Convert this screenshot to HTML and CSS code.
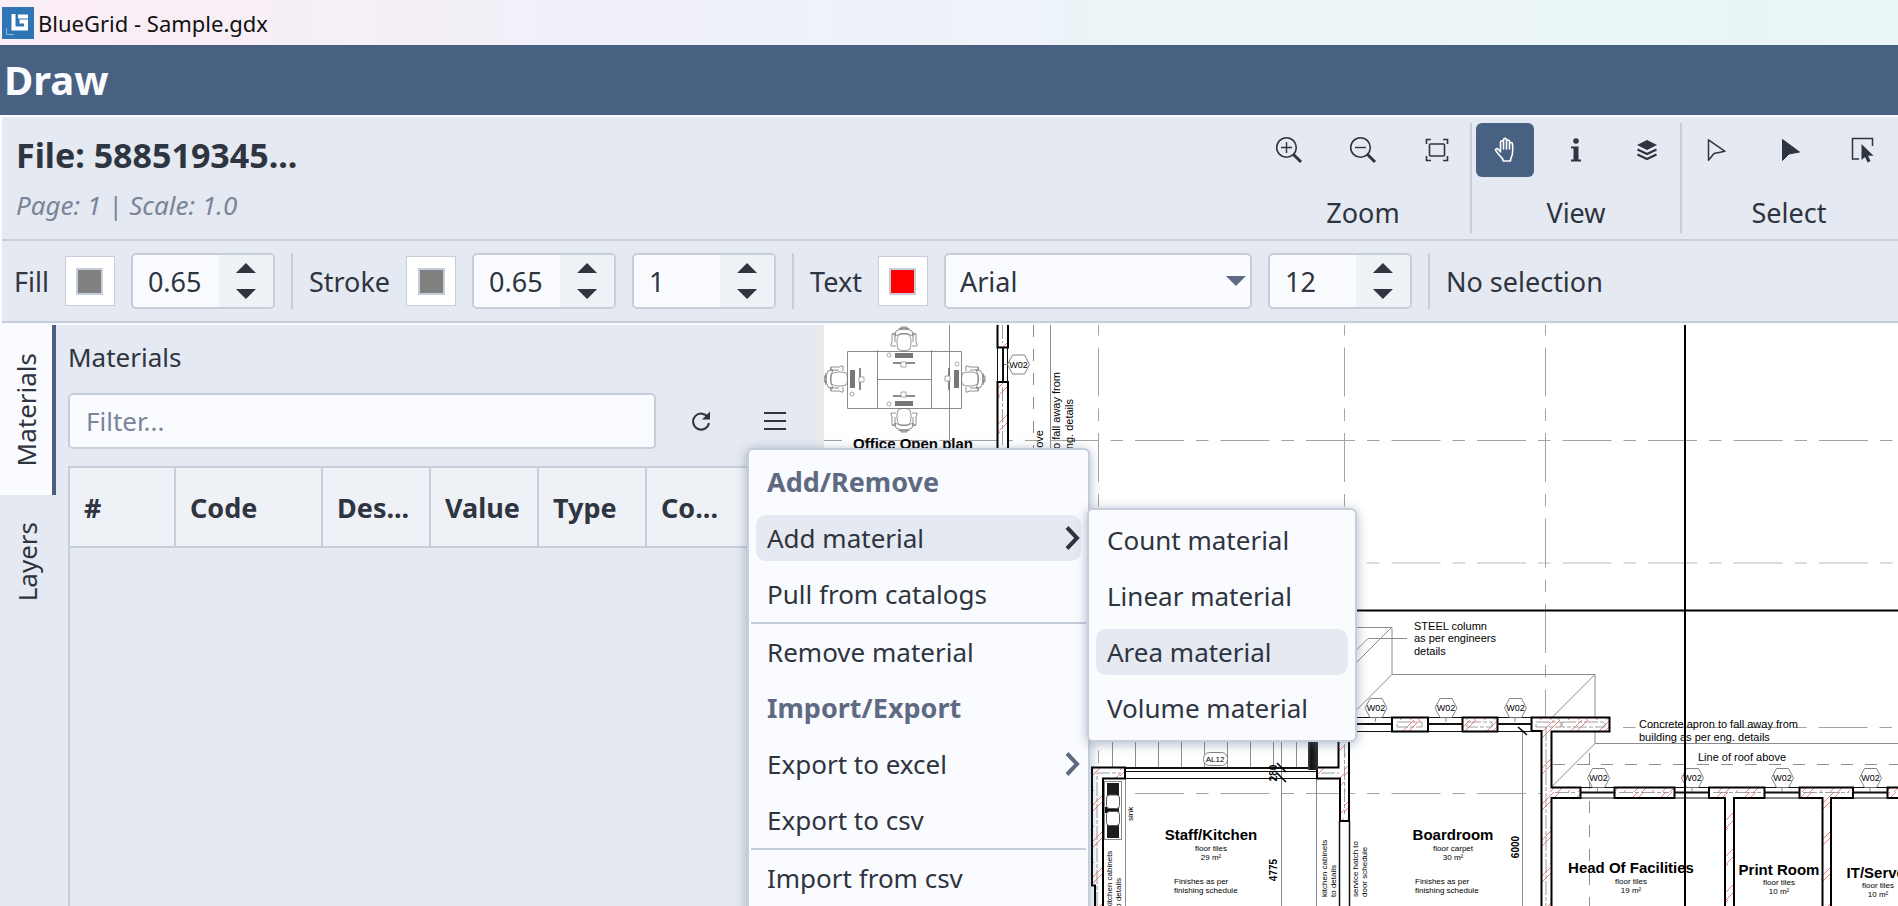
FILE: index.html
```html
<!DOCTYPE html>
<html lang="en">
<head>
<meta charset="utf-8">
<title>BlueGrid - Sample.gdx</title>
<link rel="stylesheet" href="styles.css">
</head>
<body>
<div class="app">
  <header class="titlebar">
    <svg class="logo" viewBox="0 0 32 32" aria-hidden="true"><rect width="32" height="32" fill="#2e75b6"/><path d="M11.500 7v14.500h12.500v-7h-6.500" fill="none" stroke="#fff" stroke-width="4"/><path d="M16 9.500h10" stroke="#fff" stroke-width="4"/><path d="M4.500 21v6.500H12" fill="none" stroke="#8db8dc" stroke-width="1"/></svg>
    <span>BlueGrid - Sample.gdx</span>
  </header>
  <h1 class="mode">Draw</h1>

  <section class="ribbon">
    <div class="file">
      <h2 class="file-name">File: 588519345...</h2>
      <p class="file-info">Page: 1 | Scale: 1.0</p>
    </div>
    <div class="groups">
      <div class="group">
        <div class="tools">
          <button class="tool" aria-label="Zoom in"><svg width="28" height="28" viewBox="0 0 28 28"><circle cx="11.500" cy="11.500" r="9.800" fill="none" stroke="#2e3440" stroke-width="1.600"/><path d="M6 11.500h11M11.500 6v11" stroke="#2e3440" stroke-width="1.400"/><path d="M18.500 18.500l7.500 7.500" stroke="#2e3440" stroke-width="3"/></svg></button>
          <button class="tool" aria-label="Zoom out"><svg width="28" height="28" viewBox="0 0 28 28"><circle cx="11.500" cy="11.500" r="9.800" fill="none" stroke="#2e3440" stroke-width="1.600"/><path d="M6 11.500h11" stroke="#2e3440" stroke-width="1.400"/><path d="M18.500 18.500l7.500 7.500" stroke="#2e3440" stroke-width="3"/></svg></button>
          <button class="tool" aria-label="Zoom to fit"><svg width="24" height="24" viewBox="0 0 24 24" fill="none" stroke="#2e3440" stroke-width="1.600"><path d="M1.500 6V1.500H6M18 1.500h4.500V6M22.500 18v4.500H18M6 22.500H1.500V18"/><rect x="4.500" y="6" width="15" height="12" rx="1"/></svg></button>
        </div>
        <span class="group-label">Zoom</span>
      </div>
      <div class="group group-tight">
        <div class="tools">
          <button class="tool tool-on" aria-label="Pan" aria-pressed="true"><svg width="22" height="26" viewBox="0 0 22 26" fill="none" stroke="#fff" stroke-width="1.600" stroke-linecap="round" stroke-linejoin="round"><path d="M6.500 15V5.200a1.500 1.500 0 0 1 3 0V12M9.500 5V2.900a1.500 1.500 0 0 1 3 0V12M12.500 4.500a1.500 1.500 0 0 1 3 0V12M15.500 7a1.500 1.500 0 0 1 3 0c.300 4 .700 8.500-.700 12-.600 1.600-1.300 2.500-1.300 5H9.200c0-2-1-2.800-2.400-4.300C4.600 17.500 3 15.500 1.700 13.400c-.700-1.300.900-2.500 2.300-1.200l2.500 2.600"/></svg></button>
          <button class="tool" aria-label="Info"><svg width="12" height="24" viewBox="0 0 12 24" fill="#2e3440"><circle cx="6" cy="3" r="2.800"/><path d="M1 8.500h7.500V21.500H11V23.500H1V21.500h2.500V10.500H1z"/></svg></button>
          <button class="tool" aria-label="Layers"><svg width="22" height="22" viewBox="0 0 22 22"><path d="M11 1l10 5-10 5L1 6z" fill="#2e3440"/><path d="M1.500 10.500L11 15l9.500-4.500M1.500 15.500L11 20l9.500-4.500" fill="none" stroke="#2e3440" stroke-width="2.200"/></svg></button>
        </div>
        <span class="group-label">View</span>
      </div>
      <div class="group">
        <div class="tools">
          <button class="tool" aria-label="Select outline"><svg width="26" height="24" viewBox="-5 0 26 24"><path d="M1.500 1.800v20.400L7 15.500l11-2.200z" fill="none" stroke="#2e3440" stroke-width="1.500" stroke-linejoin="round"/></svg></button>
          <button class="tool" aria-label="Select"><svg width="24" height="24" viewBox="-4 0 24 24"><path d="M1.500 1.500v21L8 16l10.500-2z" fill="#2e3440" stroke="#2e3440" stroke-linejoin="round"/></svg></button>
          <button class="tool" aria-label="Select area"><svg width="24" height="26" viewBox="0 0 24 26"><path d="M8 22H1.500V1.500h20V9" fill="none" stroke="#2e3440" stroke-width="1.500"/><path d="M10.500 7v16l3.500-3 2.600 5.500 3-1.400-2.600-5.300h5.500z" fill="#2e3440"/></svg></button>
        </div>
        <span class="group-label">Select</span>
      </div>
    </div>
  </section>

  <section class="props">
    <div class="prop">
      <span class="prop-label">Fill</span>
      <button class="swatch" aria-label="Fill colour"><span class="chip"></span></button>
      <div class="spin"><input type="text" value="0.65" aria-label="Fill opacity"><div class="spin-btns"><button class="up" aria-label="Increase"></button><button class="down" aria-label="Decrease"></button></div></div>
    </div>
    <div class="prop">
      <span class="prop-label">Stroke</span>
      <button class="swatch" aria-label="Stroke colour"><span class="chip"></span></button>
      <div class="spin"><input type="text" value="0.65" aria-label="Stroke opacity"><div class="spin-btns"><button class="up" aria-label="Increase"></button><button class="down" aria-label="Decrease"></button></div></div>
      <div class="spin"><input type="text" value="1" aria-label="Stroke width"><div class="spin-btns"><button class="up" aria-label="Increase"></button><button class="down" aria-label="Decrease"></button></div></div>
    </div>
    <div class="prop">
      <span class="prop-label">Text</span>
      <button class="swatch" aria-label="Text colour"><span class="chip chip-red"></span></button>
      <div class="select"><select aria-label="Font"><option>Arial</option></select></div>
      <div class="spin"><input type="text" value="12" aria-label="Font size"><div class="spin-btns"><button class="up" aria-label="Increase"></button><button class="down" aria-label="Decrease"></button></div></div>
    </div>
    <div class="prop"><span>No selection</span></div>
  </section>

  <main class="workspace">
    <nav class="tabs">
      <button class="tab tab-on"><span>Materials</span></button>
      <button class="tab"><span>Layers</span></button>
    </nav>
    <section class="panel">
      <h3 class="panel-title">Materials</h3>
      <div class="filter-row">
        <input class="filter" type="text" placeholder="Filter..." aria-label="Filter">
        <button class="icon-btn" aria-label="Refresh"><svg width="24" height="24" viewBox="0 0 24 24"><path d="M19 8.500A8 8 0 1 0 20 14" fill="none" stroke="#2e3440" stroke-width="2"/><path d="M21 2.500v8h-8z" fill="#2e3440"/></svg></button>
        <div class="menu-anchor">
          <button class="icon-btn" aria-label="Menu"><svg width="24" height="20" viewBox="0 0 24 20"><path d="M1 2h22M1 10h22M1 18h22" stroke="#2e3440" stroke-width="2"/></svg></button>
          <ul class="menu">
            <li class="menu-head">Add/Remove</li>
            <li class="menu-item"><button class="item item-on">Add material<svg width="16" height="24" viewBox="0 0 16 24"><path d="M2 1.500L12 12 2 22.500" fill="none" stroke="#2e3440" stroke-width="4"/></svg></button>
              <ul class="menu submenu">
                <li class="menu-item"><button class="item">Count material</button></li>
                <li class="menu-item"><button class="item">Linear material</button></li>
                <li class="menu-item"><button class="item item-on">Area material</button></li>
                <li class="menu-item"><button class="item">Volume material</button></li>
              </ul>
            </li>
            <li class="menu-item"><button class="item">Pull from catalogs</button></li>
            <li class="menu-sep"></li>
            <li class="menu-item"><button class="item">Remove material</button></li>
            <li class="menu-head">Import/Export</li>
            <li class="menu-item"><button class="item">Export to excel<svg width="16" height="24" viewBox="0 0 16 24"><path d="M2 1.500L12 12 2 22.500" fill="none" stroke="#5e6a82" stroke-width="4"/></svg></button></li>
            <li class="menu-item"><button class="item">Export to csv</button></li>
            <li class="menu-sep"></li>
            <li class="menu-item"><button class="item">Import from csv</button></li>
          </ul>
        </div>
      </div>
      <div class="table-box">
        <table class="grid">
          <colgroup><col class="c-num"><col class="c-code"><col class="c-std"><col class="c-std"><col class="c-std"><col class="c-std"><col></colgroup>
          <thead><tr><th>#</th><th>Code</th><th>Des...</th><th>Value</th><th>Type</th><th>Co...</th><th></th></tr></thead>
        </table>
      </div>
    </section>
    <div class="splitter"></div>
    <section class="canvas">
      <svg class="plan" aria-label="Floor plan">
        <defs>
          <pattern id="hatch" width="28" height="36" patternUnits="userSpaceOnUse"><rect width="28" height="36" fill="#fff"/><path d="M0 14L14 0M-2 22L20 0M10 36L28 18M18 36L28 26M-4 40L2 34" stroke="#f08080" stroke-width="1"/></pattern>
          <g id="hex"><path d="M-11 0l5-9.500h12l5 9.500-5 9.500h-12z" fill="#fff" stroke="#666" stroke-width=".8"/><text y="3" font-size="9" text-anchor="middle">W02</text></g>
          <g id="chair" fill="none" stroke="#777" stroke-width=".8"><path d="M-6 22c-2-7-1-13 2-15h8c3 2 4 8 2 15-3 2-9 2-12 0z"/><path d="M-8 4q8-4 16 0l1 5q-9-5-18 0zM-6 2q6-2.500 12 0M-9 6l-3 1v9l-1 1v2h5M-12 7h3v8M9 6l3 1v9l1 1v2H8M12 7H9v8M-3 0h6v2h-6z"/></g>
          <g id="pc"><rect x="-9" y="-4" width="18" height="5" fill="#777"/><path d="M-11 6h22" stroke="#666" stroke-width="1.500"/><path d="M-3 5h5v5h-5z" fill="#fff" stroke="#888" stroke-width=".7"/><circle cx="-15" cy="-2" r="2" fill="none" stroke="#888" stroke-width=".7"/></g>
        </defs>
        <g transform="translate(-824 -325)">
          <g class="thin">
            <path d="M949.500 325v123M1050.500 325v123"/>
            <path class="long" d="M793 440.500H1898M1135 793.500H1552M1562 727.500H1898"/>
            <path class="long wide" d="M793 563H1898"/>
            <path class="long" d="M1098.500 262V768M1344.500 262V768M1545.500 262V720"/>
            <path d="M1033.500 325v123" stroke-dasharray="12 12"/>
            <path d="M1553 764.500H1898" stroke-dasharray="12 12"/>
            <path d="M1589.500 753V906" stroke-dasharray="12 12"/>
            <path d="M1340 627.500h52v47h203v69h303M1392 627l-60 60M1392 674.500l-60 60M1595 674.500l-43 43M1595 743.500l-44 44M1407 638.500h-39l-30 30"/>
            <path d="M1522.500 731v175M1281.500 740v166M1316.500 779v127M1125.500 779v127M1112.500 740v28M1135.500 740v28M1158.500 740v28M1181.500 740v28M1204.500 740v28M1227.500 740v28M1250.500 740v28M1273.500 740v28M1296.500 740v28"/>
            <path d="M847.500 351.500h114v57h-114zM877.500 350v58M931.500 350v58M877 379.500h55"/>
          </g>
          <use href="#chair" x="904" y="327"/>
          <use href="#chair" transform="translate(904 432) rotate(180)"/>
          <use href="#chair" transform="translate(824 379) rotate(-90)"/>
          <use href="#chair" transform="translate(985 379) rotate(90)"/>
          <use href="#pc" x="904" y="357"/>
          <use href="#pc" transform="translate(904 402) scale(1 -1)"/>
          <use href="#pc" transform="translate(854 379) rotate(-90)"/>
          <use href="#pc" transform="translate(955 379) rotate(90)"/>
          <g class="wall">
            <path d="M997.500 320h10.500v27.500h-10.500zM997.500 382h10.500v70h-10.500z"/>
            <path d="M1392 717.500h36v14h-36zM1462.500 717.500h35v14h-35zM1531.500 717.500h78v14h-58v56h29v10.500h-29v120h-10v-187h-10z"/>
            <path d="M1614.500 787.500h60V798h-60zM1709 787.500h55.500V798H1734v120h-9V798h-16zM1799.500 787.500h53.500V798h-22v120h-8.500V798h-23zM1887.500 787.500h20V798h-20z"/>
            <path d="M1092 767.500h33v11h-22v140h-8v-33h-3z"/>
            <path d="M1338.500 740v27.500H1317v11h23V821h9v-81z"/>
          </g>
          <g class="core"><path d="M1397 722h25v5h-25zM1467 722h25v5h-25zM1536 722h25v5h-25zM1562 722h43v5h-43zM1546 727v179M1002.500 325v18M1002.500 387v60M1555 792.500h22M1619 792.500h50M1713 792.500h48M1803 792.500h46M1097 906V773h24M1344.500 744v70M1321 773h18"/></g>
          <g class="glass"><path d="M1340 724h52M1428 724h35M1497 724h35M1580 792.500h35M1674 792.500h35M1764 792.500h36M1853 792.500h35M1003 347v35" stroke-width="2"/>
            <path d="M1340 717.500h52M1340 731.500h52M1428 717.500h35M1428 731.500h35M1497 717.500h35M1497 731.500h35M1580 787.500h35M1580 798h35M1674 787.500h35M1674 798h35M1764 787.500h36M1764 798h36M1853 787.500h35M1853 798h35M997.500 347v35M1007.500 347v35"/>
            <path d="M1125 768h192" stroke-width="1.800"/><path d="M1125 771.500h192M1125 778.500h192"/><path d="M1339.500 821v85M1349.500 821v85" stroke-width="1.500"/></g>
          <linearGradient id="post"><stop offset="0" stop-color="#444"/><stop offset=".3" stop-color="#111"/><stop offset="1" stop-color="#333"/></linearGradient>
          <rect x="1308" y="740" width="10" height="30" fill="url(#post)"/>
          <rect x="1104.500" y="781.500" width="17" height="58" fill="#fff" stroke="#888"/><rect x="1107" y="783" width="12" height="55" fill="#1c1c1c"/>
          <rect x="1106.500" y="795" width="13" height="13.500" rx="3" fill="#fff" stroke="#555"/><rect x="1106.500" y="811.500" width="13" height="14" rx="3" fill="#fff" stroke="#555"/><path d="M1105 810h9M1106 807v6" stroke="#111" stroke-width="2"/>
          <path d="M900 610.500H1898M1685 325V906" stroke="#000" stroke-width="2"/>
          <path d="M1518 727l9 8M1277 763l9 9M1277 773l9 9" stroke="#000" stroke-width="1.500"/>
          <rect x="1203.500" y="752.500" width="24" height="13" rx="6" fill="#fff" stroke="#666" stroke-width=".8"/>
          <path d="M1375 722l1-5M1446 722v-5M1515 722v-5M1597 792l1-5M1692 792v-5M1782 792v-5M1870 792v-5M1004 364.500h4" stroke="#666" stroke-width=".8"/>
          <use href="#hex" x="1018.500" y="364.500"/><use href="#hex" x="1376" y="708"/><use href="#hex" x="1446" y="708"/><use href="#hex" x="1515.500" y="708"/>
          <use href="#hex" x="1598.500" y="778"/><use href="#hex" x="1692.500" y="778"/><use href="#hex" x="1782.500" y="778"/><use href="#hex" x="1870.500" y="778"/>
          <path d="M1685 760V796" stroke="#000" stroke-width="2"/>
          <g class="note">
            <text x="1414" y="630">STEEL column</text><text x="1414" y="642">as per engineers</text><text x="1414" y="655">details</text>
            <text x="1639" y="728">Concrete apron to fall away from</text><text x="1639" y="741">building as per eng. details</text>
            <text x="1698" y="761">Line of roof above</text>
            <text transform="translate(1043 430) rotate(-90)" text-anchor="end">Line of roof above</text>
            <text transform="translate(1060 372) rotate(-90)" text-anchor="end">Concrete apron to fall away from</text>
            <text transform="translate(1073 399) rotate(-90)" text-anchor="end">building as per eng. details</text>
          </g>
          <g class="room">
            <text x="913" y="449">Office Open plan</text><text x="1211" y="840">Staff/Kitchen</text><text x="1453" y="840">Boardroom</text>
            <text x="1631" y="873">Head Of Facilities</text><text x="1779" y="875">Print Room</text><text x="1902" y="878">IT/Server Room</text>
          </g>
          <g class="small mid">
            <text x="1211" y="851">floor tiles</text><text x="1211" y="860">29 m²</text>
            <text x="1453" y="851">floor carpet</text><text x="1453" y="860">30 m²</text>
            <text x="1631" y="884">floor tiles</text><text x="1631" y="893">19 m²</text>
            <text x="1779" y="885">floor tiles</text><text x="1779" y="894">10 m²</text>
            <text x="1878" y="888">floor tiles</text><text x="1878" y="897">10 m²</text>
            <text x="1215" y="762">AL12</text>
          </g>
          <g class="small">
            <text x="1174" y="884">Finishes as per</text><text x="1174" y="893">finishing schedule</text>
            <text x="1415" y="884">Finishes as per</text><text x="1415" y="893">finishing schedule</text>
            <text transform="translate(1133 821) rotate(-90)">sink</text>
            <text transform="translate(1112 908) rotate(-90)">kitchen cabinets</text><text transform="translate(1121 910) rotate(-90)">to details</text>
            <text transform="translate(1327 897) rotate(-90)">kitchen cabinets</text><text transform="translate(1336 897) rotate(-90)">to details</text>
            <text transform="translate(1358 897) rotate(-90)">service hatch to</text><text transform="translate(1367 897) rotate(-90)">door schedule</text>
          </g>
          <g class="dim">
            <text transform="translate(1277 870) rotate(-90)">4775</text><text transform="translate(1277 773) rotate(-90)">280</text><text transform="translate(1519 847) rotate(-90)">6000</text>
          </g>
        </g>
      </svg>
    </section>
  </main>
</div>
</body>
</html>
```
FILE: styles.css
```css
* { box-sizing: border-box; }
body { margin: 0; overflow: hidden; font-family: "Noto Sans", "Liberation Sans", sans-serif; font-size: 26px; color: #2e3440; background: #fafbfe; }
button, input, select { font: inherit; color: inherit; margin: 0; }
button { border: 0; background: none; padding: 0; }
h1, h2, h3, p, ul { margin: 0; padding: 0; }
.app { display: flex; flex-direction: column; height: 100vh; }

.titlebar { display: flex; align-items: center; gap: 4px; height: 45px; padding: 0 2px; font-size: 22px; color: #111; background: linear-gradient(90deg, #fcedf5, #f1f0f8 30%, #ecf4f8 60%, #e9f6f5); }
.logo { width: 32px; height: 32px; }
.mode { height: 70px; padding-left: 4px; line-height: 70px; font-size: 40px; color: #fafbfe; background: #486182; }

.ribbon { display: flex; justify-content: space-between; height: 124px; margin: 2px 0 0 2px; padding: 6px 2px 6px 14px; background: #e5e9f1; border-bottom: 2px solid #c7cedb; }
.file-name { font-size: 34px; line-height: 64px; }
.file-info { font-size: 26px; line-height: 36px; font-style: italic; color: #7a8599; }
.groups { display: flex; }
.group { display: flex; flex-direction: column; justify-content: space-between; height: 110px; padding: 0 4px; align-items: center; }
.group + .group { border-left: 2px solid #c7cedb; }
.tools { display: flex; gap: 16px; }
.group-tight .tools { gap: 13px; }
.tool { display: flex; align-items: center; justify-content: center; width: 58px; height: 54px; border-radius: 6px; }
.tool-on { background: #486182; }
.group-label { font-size: 27px; line-height: 40px; }

.props { display: flex; align-items: center; height: 82px; margin-left: 2px; padding-left: 12px; font-size: 27px; background: #e5e9f1; border-bottom: 2px solid #c7cedb; }
.prop { display: flex; align-items: center; gap: 16px; height: 56px; }
.prop + .prop { margin-left: 16px; padding-left: 16px; border-left: 2px solid #c7cedb; }
.swatch { display: flex; align-items: center; justify-content: center; width: 50px; height: 50px; background: #fff; border: 1px solid #c7cedb; }
.chip { width: 27px; height: 27px; background: #808080; border: 2px solid #c7cedb; }
.chip-red { background: #f00; }
.spin { display: flex; width: 144px; height: 56px; background: #fafbfe; border: 2px solid #c7cedb; border-radius: 5px; overflow: hidden; }
.spin input { flex: 1; min-width: 0; padding: 0 0 0 15px; border: 0; background: none; }
.spin-btns { display: flex; flex-direction: column; justify-content: center; align-items: center; gap: 16px; width: 54px; background: #eef1f6; }
.up, .down { width: 20px; height: 10px; background: #2e3440; clip-path: polygon(50% 0, 100% 100%, 0 100%); }
.down { clip-path: polygon(0 0, 100% 0, 50% 100%); }
.select { position: relative; width: 308px; height: 56px; }
.select select { width: 100%; height: 100%; padding: 0 14px; appearance: none; background: #fafbfe; border: 2px solid #c7cedb; border-radius: 5px; }
.select::after { content: ""; position: absolute; right: 6px; top: 23px; width: 20px; height: 10px; background: #5e6a82; clip-path: polygon(0 0, 100% 0, 50% 100%); }

.workspace { display: flex; flex: 1; min-height: 0; margin-top: 2px; overflow: hidden; }
.tabs { display: flex; flex-direction: column; width: 56px; background: #e5e9f1; }
.tab { display: flex; align-items: center; justify-content: center; height: 170px; padding-right: 2px; }
.tab + .tab { height: 134px; }
.tab span { writing-mode: vertical-rl; transform: rotate(180deg); }
.tab-on { padding-right: 0; background: #fafbfe; border-right: 4px solid #486182; }
.panel { display: flex; flex-direction: column; width: 760px; padding: 12px 12px 0; background: #e5e9f1; }
.panel-title { font-size: 26px; font-weight: 400; line-height: 40px; }
.filter-row { display: flex; align-items: center; gap: 16px; margin: 16px 0 17px; }
.filter { width: 588px; height: 56px; padding: 0 16px; background: #fafbfe; border: 2px solid #c7cedb; border-radius: 5px; }
.filter::placeholder { color: #7a8599; opacity: 1; }
.icon-btn { display: flex; align-items: center; justify-content: center; width: 58px; height: 56px; }
.menu-anchor { position: relative; }
.table-box { flex: 1; border: 2px solid #c7cedb; border-bottom: 0; }
.grid { width: 100%; table-layout: fixed; border-collapse: separate; border-spacing: 0; }
.grid th { height: 80px; padding: 0 0 0 14px; text-align: left; font-size: 27px; font-weight: 700; white-space: nowrap; background: #eef1f6; border-right: 2px solid #c7cedb; border-bottom: 2px solid #c7cedb; }
.c-num { width: 106px; }
.c-code { width: 147px; }
.c-std { width: 108px; }

.menu { position: absolute; z-index: 2; top: 55px; left: 1px; width: 343px; min-height: 480px; padding: 4px 2px; list-style: none; background: #fafbfe; border: 2px solid #c7cedb; border-radius: 6px; box-shadow: 0 2px 12px rgba(72, 97, 130, .45); }
.menu-head { height: 56px; padding-left: 16px; font-size: 27px; line-height: 56px; font-weight: 700; color: #5e6a82; }
.menu-item { position: relative; height: 56px; padding: 5px; }
.item { display: flex; align-items: center; justify-content: space-between; width: 100%; height: 46px; padding-left: 11px; border-radius: 10px; text-align: left; }
.item-on { background: #e5e9f1; }
.menu-sep { height: 2px; background: #c7cedb; }
.menu .submenu { top: -2px; left: 336px; width: 270px; min-height: 0; padding-top: 2px; }

.splitter { width: 8px; background: #e9eaed; }
.canvas { flex: 1; min-width: 0; background: #fff; }
.plan { display: block; width: 100%; height: 100%; font-family: "Liberation Sans", Arial, sans-serif; }
.thin path { fill: none; stroke: #8c8c8c; stroke-width: 1; }
.thin .long { stroke: #a4a4a4; stroke-dasharray: 49 12 12.5 12; }
.thin .wide { stroke: #dcdcdc; stroke-width: 2; }
.wall path { fill: url(#hatch); stroke: #000; stroke-width: 2; }
.core path { fill: none; stroke: #888; stroke-width: .8; stroke-dasharray: 14 2 4 2; }
.glass path { fill: none; stroke: #111; }
.note text { font-size: 11px; }
.room text { font-size: 15px; font-weight: 700; text-anchor: middle; }
.small text { font-size: 8px; }
.mid text { text-anchor: middle; }
.dim text { font-size: 10px; font-weight: 700; text-anchor: middle; }
```
